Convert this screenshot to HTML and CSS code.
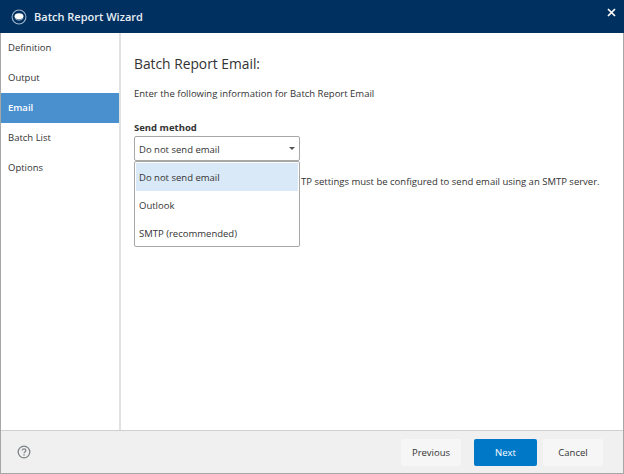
FILE: index.html
```html
<!DOCTYPE html>
<html lang="en">
<head>
    <meta charset="UTF-8">
    <title>Batch Report Wizard</title>
    <link rel="stylesheet" href="styles.css">
</head>
<body>
    <div class="window">
        <div class="titlebar">
            <svg class="logo" width="16" height="16" viewBox="0 0 18 18">
                <circle cx="9" cy="9" r="7.8" fill="none" stroke="#9fb6cf" stroke-width="1.2"/>
                <ellipse cx="9" cy="8.2" rx="5" ry="3.4" fill="#fff"/>
                <path d="M4.5 10.500c1.500 2.500 7.500 2.500 9 0" fill="none" stroke="#c5d3e2" stroke-width="1"/>
            </svg>
            <span class="title">Batch Report Wizard</span>
            <svg class="close" width="9" height="9" viewBox="0 0 9 9">
                <path d="M1 1l7 7M8 1l-7 7" stroke="#fff" stroke-width="1.7"/>
            </svg>
        </div>
        <div class="main">
            <div class="sidebar">
                <div class="nav-item">Definition</div>
                <div class="nav-item">Output</div>
                <div class="nav-item active">Email</div>
                <div class="nav-item">Batch List</div>
                <div class="nav-item">Options</div>
            </div>
            <div class="content">
                <h2>Batch Report Email:</h2>
                <p class="intro">Enter the following information for Batch Report Email</p>
                <label class="field-label">Send method</label>
                <div class="combo-wrap">
                    <div class="combo">
                        <span class="combo-text">Do not send email</span>
                        <span class="arrow"></span>
                    </div>
                    <div class="popup">
                        <div class="option selected">Do not send email</div>
                        <div class="option">Outlook</div>
                        <div class="option">SMTP (recommended)</div>
                    </div>
                </div>
                <p class="note">TP settings must be configured to send email using an SMTP server.</p>
            </div>
        </div>
        <div class="footer">
            <svg class="help" width="14" height="14" viewBox="0 0 14 14">
                <circle cx="7" cy="7" r="5.8" fill="none" stroke="#7d8488" stroke-width="1.3"/>
                <path d="M5.2 5.500c.2-1.200 1-1.600 1.900-1.600 1 0 1.800.6 1.800 1.500 0 1.300-1.800 1.400-1.800 2.800" fill="none" stroke="#7d8488" stroke-width="1.2"/>
                <rect x="6.4" y="9.3" width="1.3" height="1.3" fill="#7d8488"/>
            </svg>
            <div class="buttons">
                <button class="btn">Previous</button>
                <button class="btn primary">Next</button>
                <button class="btn">Cancel</button>
            </div>
        </div>
    </div>
</body>
</html>
```

FILE: styles.css
```css
* {
    margin: 0;
    padding: 0;
    box-sizing: border-box;
}

body {
    font-family: 'Open Sans', 'Noto Sans', sans-serif;
    font-size: 9.5px;
    color: #333;
    background: #fff;
    overflow: hidden;
}

.window {
    width: 624px;
    height: 474px;
    display: flex;
    flex-direction: column;
    border: 1px solid #a6a6a6;
    border-top: none;
}

.titlebar {
    height: 33px;
    margin: 0 -1px;
    padding: 0 8px 0 11px;
    background: #00305f;
    color: #fff;
    display: flex;
    align-items: center;
    flex-shrink: 0;
}

.logo {
    margin-right: 7px;
}

.title {
    font-size: 11px;
    font-weight: 600;
    color: #e8eef4;
}

.close {
    margin-left: auto;
    margin-top: -8px;
}

.main {
    flex: 1;
    display: flex;
    min-height: 0;
}

.sidebar {
    width: 120px;
    border-right: 2px solid #e1e1e1;
    flex-shrink: 0;
}

.nav-item {
    height: 30px;
    line-height: 30px;
    padding-left: 7px;
}

.nav-item.active {
    background: #4a90cf;
    color: #fff;
    font-weight: 600;
}

.content {
    flex: 1;
    padding: 21px 13px 0;
}

h2 {
    font-size: 13.8px;
    font-weight: 400;
    line-height: 20px;
    color: #333;
}

.intro {
    margin-top: 13px;
    line-height: 14px;
}

.field-label {
    display: block;
    margin-top: 20px;
    font-weight: 700;
    line-height: 13px;
}

.combo-wrap {
    position: relative;
    width: 166px;
    margin-top: 2px;
}

.combo {
    height: 25px;
    padding: 0 4px;
    border: 1px solid #a8a8a8;
    border-radius: 2px;
    background: #fff;
    display: flex;
    align-items: center;
    justify-content: space-between;
}

.combo-text {
    padding-top: 2px;
}

.arrow {
    width: 0;
    height: 0;
    border-left: 3.5px solid transparent;
    border-right: 3.5px solid transparent;
    border-top: 3.5px solid #555;
}

.popup {
    position: absolute;
    top: 25px;
    left: 0;
    width: 166px;
    height: 86px;
    padding: 1px;
    background: #fff;
    border: 1px solid #a8a8a8;
    border-radius: 2px;
}

.option {
    height: 28px;
    line-height: 30px;
    padding-left: 3px;
}

.option.selected {
    background: #d9e9f7;
}

.note {
    margin-top: 14px;
    padding-left: 167px;
    line-height: 14px;
    white-space: nowrap;
}

.footer {
    height: 43px;
    flex-shrink: 0;
    padding: 0 20px 0 16px;
    background: #f0f0f0;
    border-top: 1px solid #d0d0d0;
    display: flex;
    align-items: center;
    justify-content: space-between;
}

.buttons {
    display: flex;
}

.btn {
    width: 60px;
    height: 27px;
    margin-left: 13px;
    border: none;
    border-radius: 2px;
    background: #f6f6f6;
    color: #333;
    font-family: inherit;
    font-size: 9.5px;
}

.btn.primary {
    width: 63px;
    background: #0078c8;
    color: #fff;
}

.btn.primary + .btn {
    margin-left: 6px;
}
```
